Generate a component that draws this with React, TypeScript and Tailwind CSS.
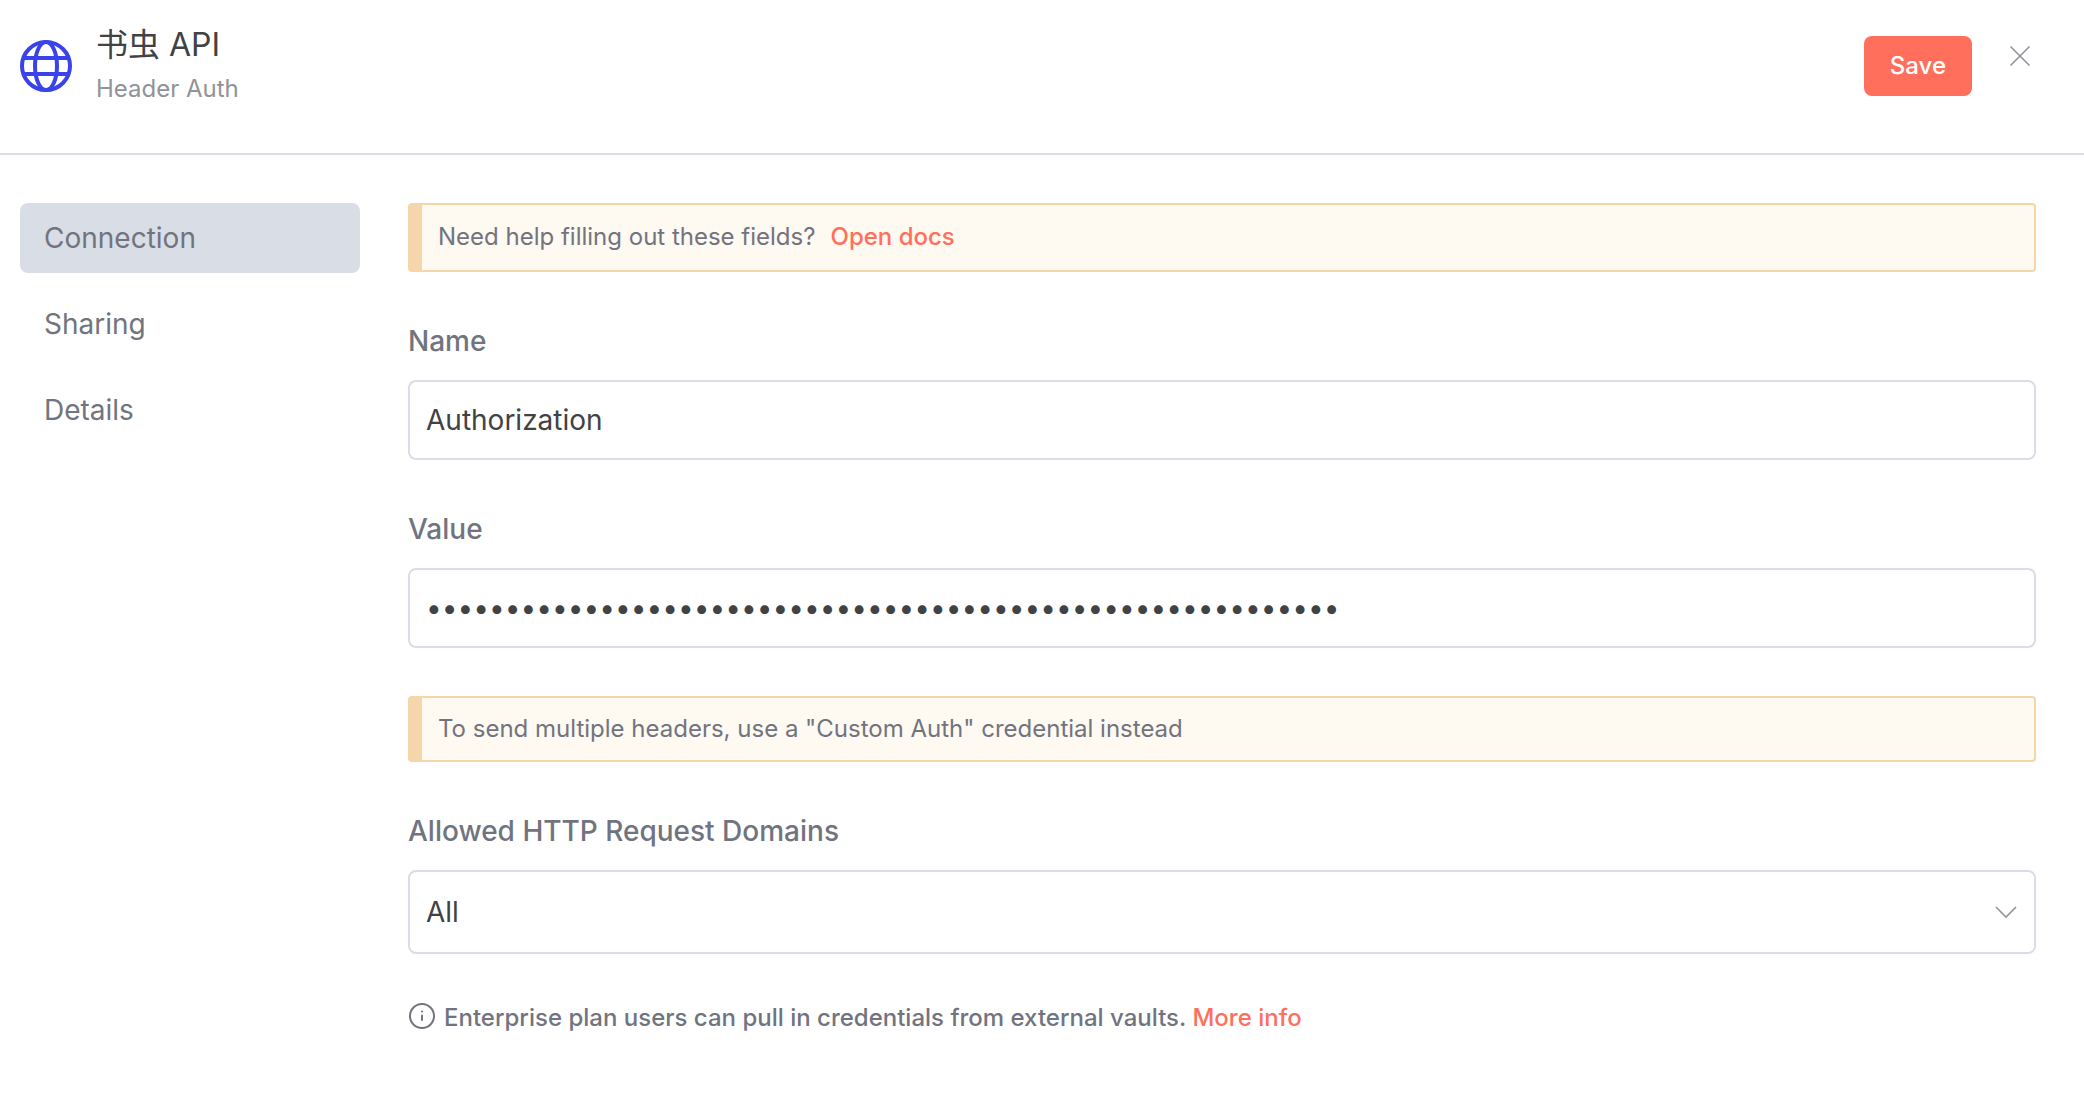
import React from 'react';

const tabs = ['Connection', 'Sharing', 'Details'];

const GlobeIcon = () => (
    <svg className="mt-5 h-13 w-13 shrink-0" viewBox="0 0 52 52" fill="none" stroke="#3a42e9" strokeWidth="4" aria-hidden="true">
        <circle cx="26" cy="26" r="24" />
        <ellipse cx="26" cy="26" rx="11" ry="24" />
        <path d="M4 18H48M4 34H48" />
    </svg>
);

const CloseIcon = () => (
    <svg className="h-6 w-6" viewBox="0 0 24 24" fill="none" stroke="#909399" strokeWidth="1.6" aria-hidden="true">
        <path d="M2.5 2.5L21.5 21.5M21.5 2.5L2.5 21.5" />
    </svg>
);

const InfoIcon = () => (
    <svg className="h-7 w-7 shrink-0" viewBox="0 0 28 28" fill="none" stroke="currentColor" strokeWidth="2" aria-hidden="true">
        <circle cx="14" cy="14" r="12" />
        <path d="M14 13.5V18" strokeLinecap="round" />
        <circle cx="14" cy="9.5" r="1.1" fill="currentColor" stroke="none" />
    </svg>
);

const ChevronIcon = () => (
    <svg className="h-6 w-6" viewBox="0 0 24 24" fill="none" stroke="#909399" strokeWidth="1.6" aria-hidden="true">
        <path d="M2 7L12 17L22 7" />
    </svg>
);

interface FieldProps {
    id: string;
    label: string;
    children: React.ReactNode;
}

const Field = ({ id, label, children }: FieldProps) => (
    <div className="flex flex-col gap-[18px]">
        <label htmlFor={id} className="text-[28px] leading-[42px] font-medium text-[#71747f]">{label}</label>
        {children}
    </div>
);

const Notice = ({ children }: { children: React.ReactNode }) => (
    <div className="rounded-sm border-2 border-l-[14px] border-[#f5d6ab] bg-[#fef9f1] px-4 py-[15px] text-2xl text-[#71747f]">
        {children}
    </div>
);

const App = () => {
    const inputStyle = 'h-20 w-full rounded-lg border-2 border-[#d9dde8] bg-white px-4 text-[28px] text-[#414244] outline-none';

    return (
        <div className="min-h-screen bg-white font-['Inter','Noto_Sans_CJK_SC',sans-serif]">
            {/* Header */}
            <header className="flex items-start gap-6 border-b-2 border-[#d9dde8] pt-5 pr-10 pb-12 pl-5">
                <GlobeIcon />
                <div className="flex flex-1 flex-col gap-[3px]">
                    <h1 className="text-[32px] leading-[50px] font-normal text-[#414244]">书虫 API</h1>
                    <p className="text-2xl text-[#909399]">Header Auth</p>
                </div>
                <button className="mt-4 h-15 rounded-lg bg-[#ff6f5c] px-[26px] text-2xl font-medium text-white">Save</button>
                <button aria-label="Close" className="mt-4 px-3 py-2">
                    <CloseIcon />
                </button>
            </header>

            <div className="flex gap-12 pt-12 pr-12 pl-5">
                {/* Sidebar */}
                <nav className="flex w-85 shrink-0 flex-col gap-4">
                    {tabs.map((tab, index) => (
                        <a
                            key={tab}
                            href="#"
                            className={`rounded-lg px-6 py-[15px] text-[28px] leading-10 text-[#71747f] ${index === 0 ? 'bg-[#d9dde6]' : ''}`}
                        >
                            {tab}
                        </a>
                    ))}
                </nav>

                {/* Credential form */}
                <main className="flex flex-1 flex-col gap-12">
                    <Notice>
                        <p className="pb-0.5 leading-[33px]">
                            Need help filling out these fields?
                            <a href="#" className="ml-[15px] font-medium text-[#ff6f5c]">Open docs</a>
                        </p>
                    </Notice>
                    <Field id="name" label="Name">
                        <input id="name" type="text" defaultValue="Authorization" className={inputStyle} />
                    </Field>
                    <Field id="value" label="Value">
                        <input id="value" type="password" defaultValue={'x'.repeat(58)} className={inputStyle} />
                    </Field>
                    <Notice>To send multiple headers, use a "Custom Auth" credential instead</Notice>
                    <Field id="domains" label="Allowed HTTP Request Domains">
                        <div className="relative">
                            <select id="domains" className="h-21 w-full appearance-none rounded-lg border-2 border-[#d9dde8] bg-white px-4 text-[28px] text-[#414244] outline-none">
                                <option>All</option>
                            </select>
                            <span className="pointer-events-none absolute inset-y-0 right-[18px] flex items-center">
                                <ChevronIcon />
                            </span>
                        </div>
                    </Field>
                    <p className="flex items-start gap-2 text-2xl font-medium text-[#71747f]">
                        <InfoIcon />
                        <span>
                            Enterprise plan users can pull in credentials from external vaults.{' '}
                            <a href="#" className="text-[#ff6f5c]">More info</a>
                        </span>
                    </p>
                </main>
            </div>
        </div>
    );
};

export default App;
